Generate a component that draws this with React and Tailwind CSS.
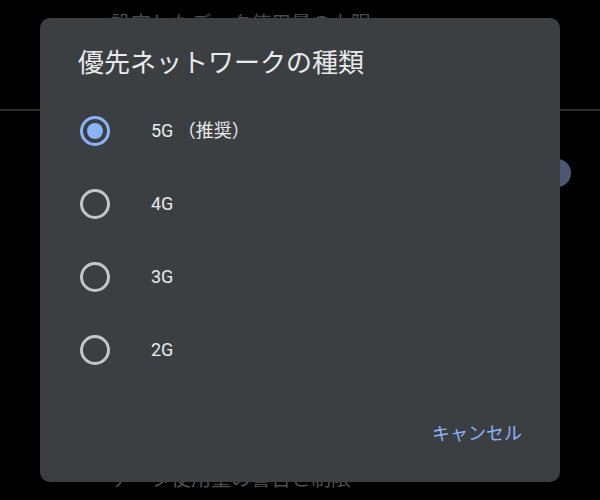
const options = [
  { label: '5G （推奨）', selected: true },
  { label: '4G', selected: false },
  { label: '3G', selected: false },
  { label: '2G', selected: false },
];

function Radio({ selected }) {
  if (selected) {
    return (
      <div className="w-[30px] h-[30px] rounded-full border-[3px] border-[#8ab4f8] flex items-center justify-center shrink-0">
        <div className="w-[16px] h-[16px] rounded-full bg-[#8ab4f8]" />
      </div>
    );
  }
  return <div className="w-[30px] h-[30px] rounded-full border-[3px] border-[#c4c5c7] shrink-0" />;
}

export default function App() {
  return (
    <div
      className="relative w-[600px] h-[500px] bg-black overflow-hidden"
      style={{ fontFamily: 'Roboto, "Noto Sans CJK JP", sans-serif' }}
    >
      {/* dimmed settings screen behind the dialog */}
      <div className="flex flex-col">
        <div className="mt-[10px] h-[28px] pl-[111px] text-[20px] leading-[28px] text-[#4a4a4a]">
          設定したデータ使用量の上限
        </div>
        <div className="mt-[71px] h-[2px] bg-[#2e2e2e]" />
        <div className="mt-[48px] flex justify-end pr-[29px]">
          <div className="w-[28px] h-[28px] rounded-full bg-[#4c5773]" />
        </div>
        <div className="mt-[278px] h-[28px] pl-[111px] text-[20px] leading-[28px] text-[#505050]">
          データ使用量の警告と制限
        </div>
      </div>

      {/* dialog */}
      <div className="absolute left-[40px] top-[18px] w-[520px] h-[464px] rounded-[10px] bg-[#3c3f42] flex flex-col">
        <div className="mt-[27px] pl-[38px] h-[36px] text-[26px] leading-[36px] text-[#e8eaed]">
          優先ネットワークの種類
        </div>
        <div className="mt-[13px] flex flex-col">
          {options.map((o) => (
            <div key={o.label} className="h-[73px] flex items-center pl-[40px] gap-[41px]">
              <Radio selected={o.selected} />
              <span className="text-[18px] text-[#e8eaed]">{o.label}</span>
            </div>
          ))}
        </div>
        <div className="mt-[29px] flex justify-end pr-[30px]">
          <button className="h-[36px] px-2 text-[18px] text-[#8ab4f8]">キャンセル</button>
        </div>
      </div>
    </div>
  );
}
